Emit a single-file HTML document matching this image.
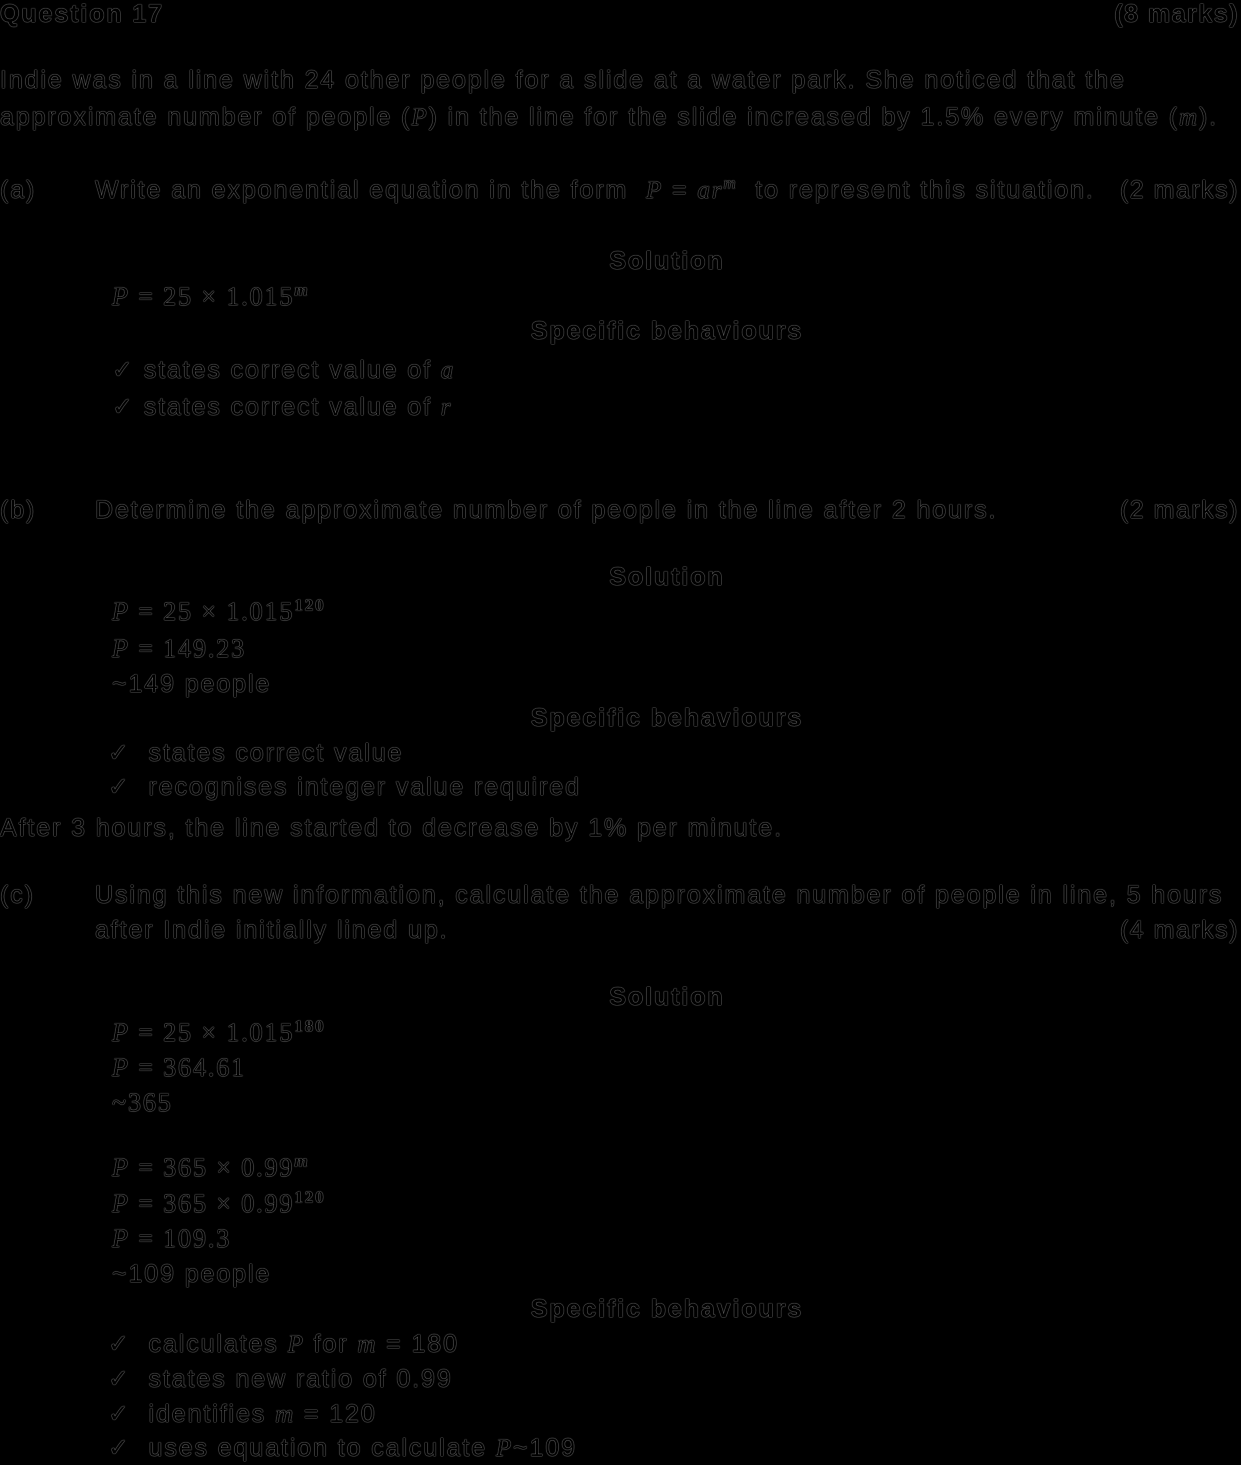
<!DOCTYPE html>
<html><head><style>
html,body{margin:0;padding:0;background:#000;}
body{width:1241px;height:1465px;position:relative;overflow:hidden;font-family:"Liberation Sans",sans-serif;font-size:25px;letter-spacing:1.9px;color:#000;}
div{position:absolute;white-space:nowrap;line-height:28px;text-shadow:0 0 1px #9a9a9a,0 0 1px #9a9a9a;}
.b{font-weight:bold;}
.c{left:0;width:1334px;text-align:center;}
.m{font-family:"Liberation Serif",serif;font-size:26px;}
i{font-family:"Liberation Serif",serif;}
sup{font-size:17px;line-height:0;font-weight:bold;}
.r{right:2px;letter-spacing:1.5px;}
</style></head><body>
<div class="b" style="left:0;top:0px">Question 17</div>
<div class="b r" style="top:0px">(8 marks)</div>
<div style="left:0;top:66px">Indie was in a line with 24 other people for a slide at a water park. She noticed that the</div>
<div style="left:0;top:103px">approximate number of people (<i>P</i>) in the line for the slide increased by 1.5% every minute (<i>m</i>).</div>
<div style="left:0;top:176px">(a)</div>
<div style="left:95px;top:176px">Write an exponential equation in the form &nbsp;<i>P</i> = <i>ar<sup style="font-weight:normal">m</sup></i>&nbsp; to represent this situation.</div>
<div class="r" style="top:176px">(2 marks)</div>
<div class="b c" style="top:247px">Solution</div>
<div class="m" style="left:112px;top:283px"><i>P</i> = 25 × 1.015<sup><i>m</i></sup></div>
<div class="b c" style="top:317px">Specific behaviours</div>
<div style="left:112px;top:356px">✓ states correct value of <i>a</i></div>
<div style="left:112px;top:393px">✓ states correct value of <i>r</i></div>
<div style="left:0;top:496px">(b)</div>
<div style="left:95px;top:496px">Determine the approximate number of people in the line after 2 hours.</div>
<div class="r" style="top:496px">(2 marks)</div>
<div class="b c" style="top:563px">Solution</div>
<div class="m" style="left:112px;top:598px"><i>P</i> = 25 × 1.015<sup>120</sup></div>
<div class="m" style="left:112px;top:635px"><i>P</i> = 149.23</div>
<div style="left:112px;top:670px">~149 people</div>
<div class="b c" style="top:704px">Specific behaviours</div>
<div style="left:108px;top:739px">✓ &nbsp;states correct value</div>
<div style="left:108px;top:773px">✓ &nbsp;recognises integer value required</div>
<div style="left:0;top:814px">After 3 hours, the line started to decrease by 1% per minute.</div>
<div style="left:0;top:881px">(c)</div>
<div style="left:95px;top:881px">Using this new information, calculate the approximate number of people in line, 5 hours</div>
<div style="left:95px;top:916px">after Indie initially lined up.</div>
<div class="r" style="top:916px">(4 marks)</div>
<div class="b c" style="top:983px">Solution</div>
<div class="m" style="left:112px;top:1019px"><i>P</i> = 25 × 1.015<sup>180</sup></div>
<div class="m" style="left:112px;top:1054px"><i>P</i> = 364.61</div>
<div class="m" style="left:112px;top:1089px">~365</div>
<div class="m" style="left:112px;top:1154px"><i>P</i> = 365 × 0.99<sup><i>m</i></sup></div>
<div class="m" style="left:112px;top:1190px"><i>P</i> = 365 × 0.99<sup>120</sup></div>
<div class="m" style="left:112px;top:1225px"><i>P</i> = 109.3</div>
<div style="left:112px;top:1260px">~109 people</div>
<div class="b c" style="top:1295px">Specific behaviours</div>
<div style="left:108px;top:1330px">✓ &nbsp;calculates <i>P</i> for <i>m</i> = 180</div>
<div style="left:108px;top:1365px">✓ &nbsp;states new ratio of 0.99</div>
<div style="left:108px;top:1400px">✓ &nbsp;identifies <i>m</i> = 120</div>
<div style="left:108px;top:1434px">✓ &nbsp;uses equation to calculate <i>P</i>~109</div>
</body></html>
